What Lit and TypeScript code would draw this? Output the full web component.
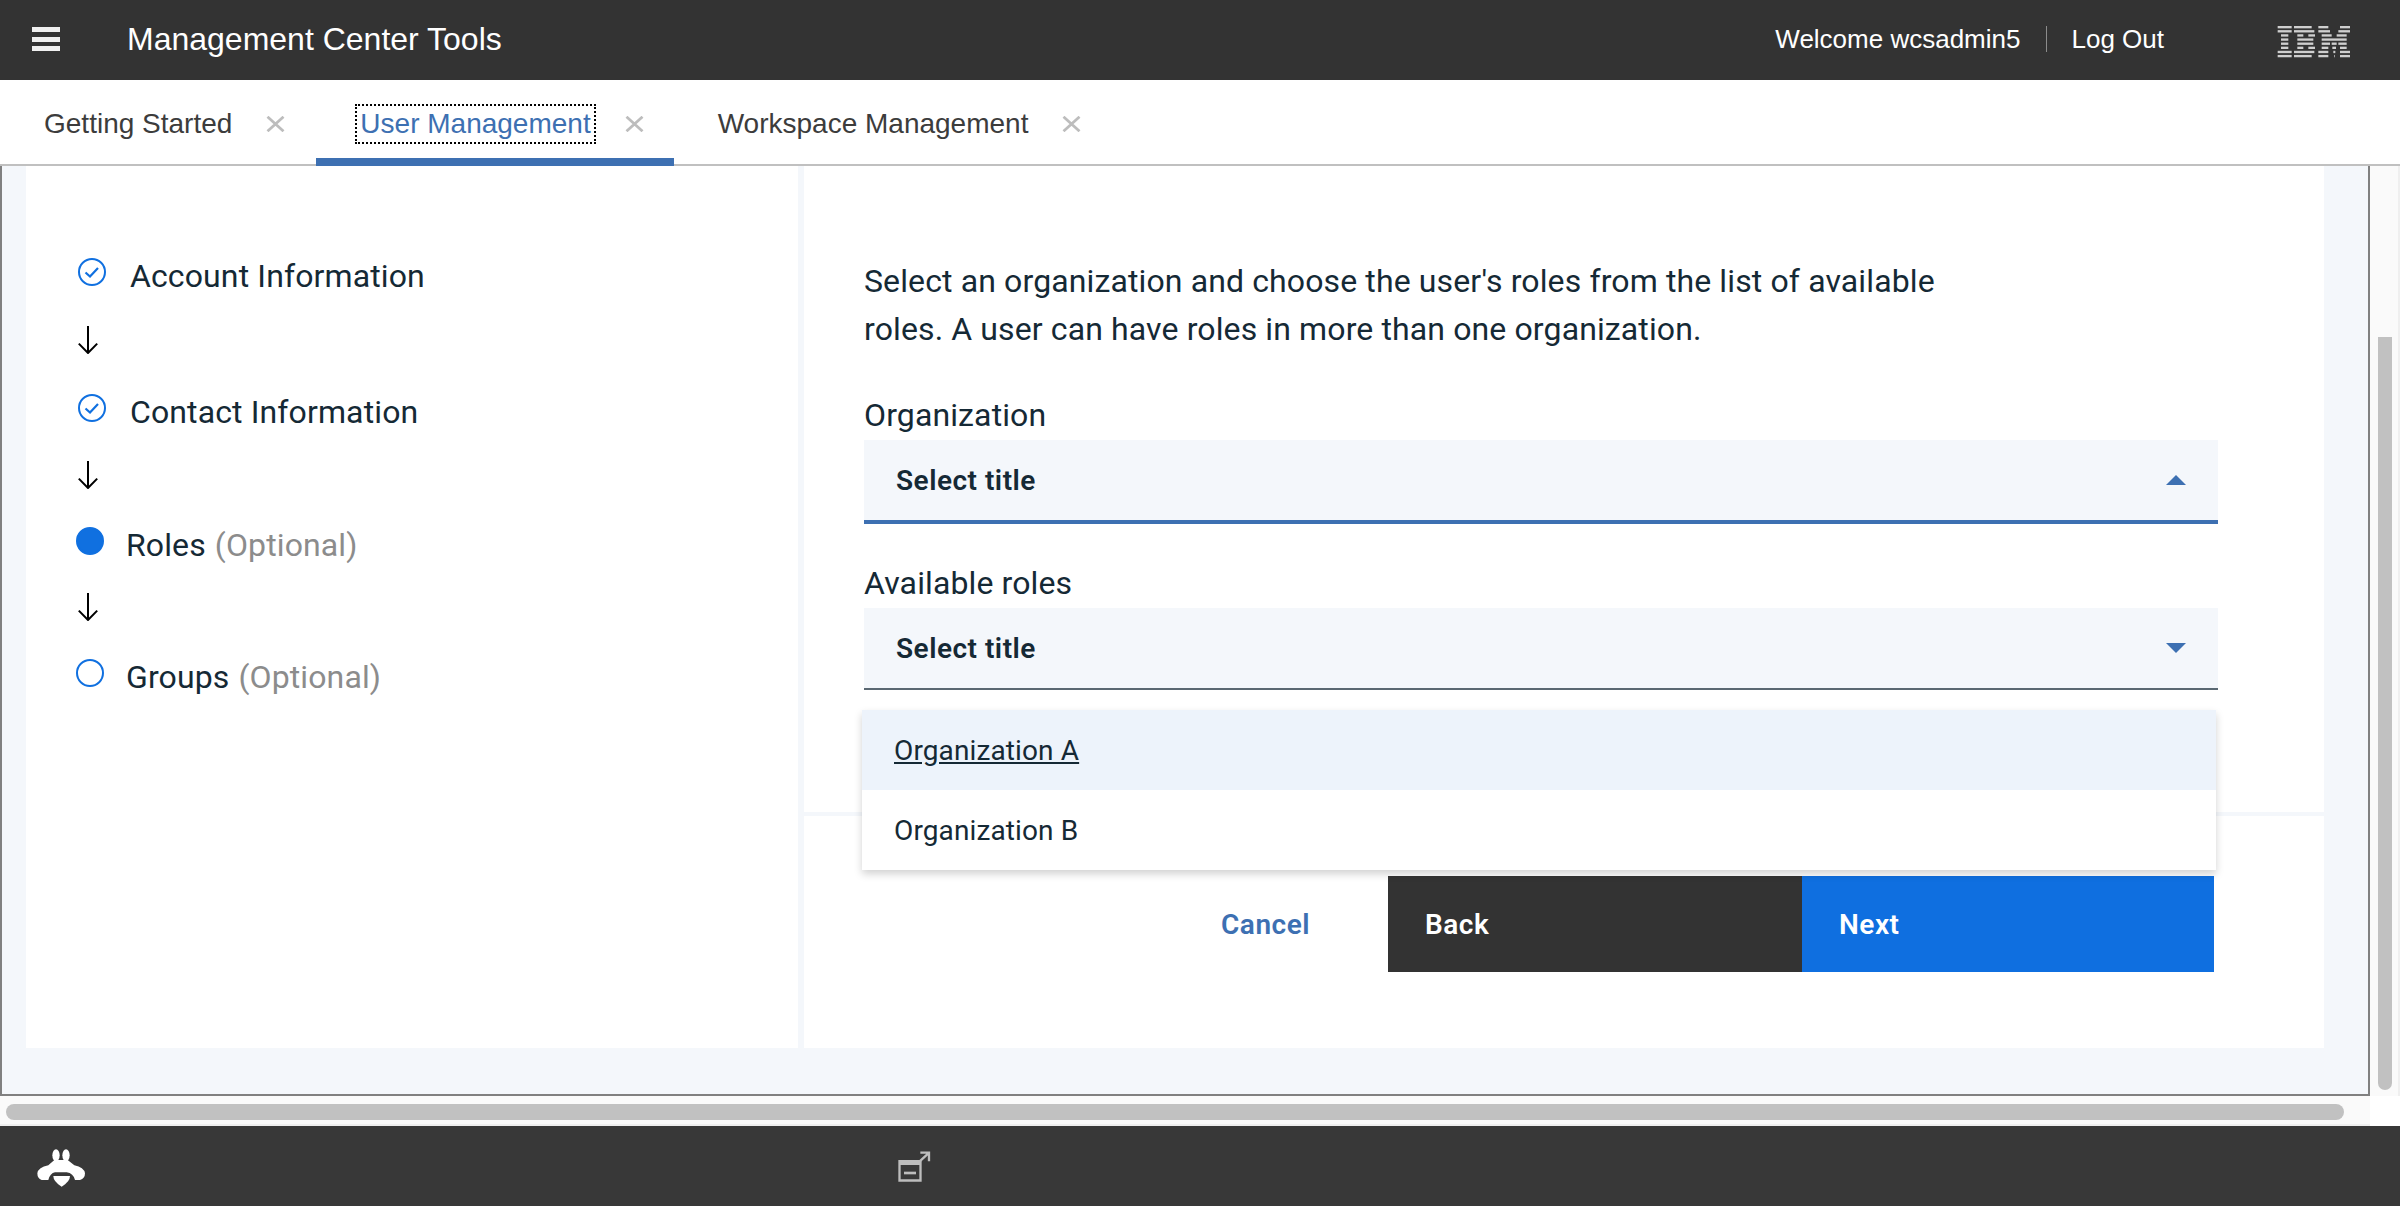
import { LitElement, html, css, svg } from "lit";
import { customElement } from "lit/decorators.js";

// x ranges of each of the eight logo bars, in the logo's own units
const IBM_ROWS: number[][][] = [
  [[38, 80], [87, 140], [160, 190], [225, 255]],
  [[38, 80], [87, 148], [160, 195], [220, 255]],
  [[48, 70], [97, 115], [130, 150], [170, 200], [215, 245]],
  [[48, 70], [97, 145], [170, 245]],
  [[48, 70], [97, 145], [170, 195], [200, 215], [220, 245]],
  [[48, 70], [97, 115], [130, 150], [170, 190], [202, 213], [225, 245]],
  [[38, 80], [87, 148], [160, 190], [205, 211], [225, 255]],
  [[38, 80], [87, 140], [160, 190], [207, 209], [225, 255]],
];

const closeIcon = html`<svg class="close" viewBox="0 0 19 16">
  <path d="M1.5 .8 17.5 15.2M17.5 .8 1.5 15.2" fill="none" stroke="#bdbdbd" stroke-width="2.8" />
</svg>`;

const arrowIcon = html`<svg class="arrow" viewBox="0 0 20 28">
  <path d="M10 0V27M.8 17.6 10 27l9.2-9.4" fill="none" stroke="#000" stroke-width="2" />
</svg>`;

const checkIcon = html`<svg class="check" viewBox="0 0 28 28">
  <circle cx="14" cy="14" r="13" fill="none" stroke="#1070e0" stroke-width="2" />
  <path d="M7.5 14.5 12 18.5 20 10" fill="none" stroke="#1070e0" stroke-width="2.2" />
</svg>`;

const caret = (up: boolean) => html`<svg class="caret" viewBox="0 0 20 10">
  <path d=${up ? "M0 10 10 0l10 10z" : "M0 0h20L10 10z"} fill="#3d70b2" />
</svg>`;

@customElement("app-root")
export class AppRoot extends LitElement {
  static styles = css`
    :host {
      display: flex;
      flex-direction: column;
      width: 2400px;
      height: 1206px;
      overflow: hidden;
      font-family: Roboto, sans-serif;
      letter-spacing: 0.12px;
      color: #152935;
      background: #fff;
    }
    header {
      height: 80px;
      flex: none;
      display: flex;
      align-items: center;
      padding-bottom: 2px;
      box-sizing: border-box;
      background: #333;
      color: #fff;
      font-family: "Liberation Sans", sans-serif;
      font-size: 26px;
      letter-spacing: 0;
    }
    .burger {
      width: 28px;
      height: 24px;
      margin-left: 32px;
      display: flex;
      flex-direction: column;
      justify-content: space-between;
    }
    .burger span {
      height: 5px;
      background: #f0f0f0;
    }
    .title {
      margin-left: 67px;
      font-size: 32px;
      flex: 1;
    }
    .sep {
      width: 1px;
      height: 26px;
      margin: 0 24px 0 26px;
      background: #8c8c8c;
    }
    .logo {
      width: 100px;
      height: 50px;
      margin: 2px 35px 0 101px;
    }
    .tabs {
      height: 84px;
      flex: none;
      display: flex;
      border-bottom: 2px solid #c0c0c0;
      font-family: "Liberation Sans", sans-serif;
      font-size: 28px;
      letter-spacing: 0;
      color: #3c3c3c;
    }
    .tab {
      display: flex;
      align-items: center;
      height: 86px;
      box-sizing: border-box;
      padding: 2px 31px 0 39px;
    }
    .tab.active {
      border-bottom: 8px solid #3d70b2;
      padding: 10px 30px 0 39px;
      color: #3d70b2;
    }
    .tab.active .label {
      outline: 2px dotted #000;
      outline-offset: -2px;
    }
    .label {
      height: 40px;
      line-height: 40px;
      padding: 0 5px;
      margin-right: 29px;
    }
    .close {
      width: 19px;
      height: 16px;
      flex: none;
    }
    .middle {
      flex: 1;
      display: flex;
      min-height: 0;
    }
    .frame {
      flex: 1;
      display: flex;
      gap: 6px;
      box-sizing: border-box;
      padding: 0 44px 46px 24px;
      background: #f4f7fb;
      border: 2px solid #808080;
      border-top: 0;
    }
    .steps {
      width: 772px;
      flex: none;
      box-sizing: border-box;
      padding: 72px 0 0 50px;
      background: #fff;
    }
    .row {
      height: 68px;
      display: flex;
      align-items: center;
      font-size: 32px;
    }
    .row.tight {
      height: 66px;
    }
    .name {
      padding-top: 8px;
    }
    .check {
      width: 28px;
      height: 28px;
      margin: 0 24px 0 2px;
    }
    .arrow {
      width: 20px;
      height: 28px;
      margin-left: 2px;
    }
    .dot {
      width: 28px;
      height: 28px;
      box-sizing: border-box;
      margin-right: 22px;
      border: 2px solid #1070e0;
      border-radius: 50%;
    }
    .dot.on {
      background: #1070e0;
    }
    .optional {
      color: #8c8c8c;
      margin-left: 9px;
    }
    .panel {
      flex: 1;
      display: flex;
      flex-direction: column;
      gap: 4px;
      position: relative;
    }
    .form {
      height: 646px;
      box-sizing: border-box;
      padding: 91px 0 0 60px;
      background: #fff;
    }
    .form p {
      margin: 0 0 38px;
      font-size: 32px;
      line-height: 48px;
    }
    .field {
      font-size: 32px;
      line-height: 48px;
      margin-bottom: 1px;
    }
    .select {
      width: 1354px;
      height: 84px;
      box-sizing: border-box;
      display: flex;
      align-items: center;
      justify-content: space-between;
      padding: 0 32px 0 32px;
      margin-bottom: 35px;
      background: #f4f7fb;
      border-bottom: 4px solid #3d70b2;
      font-size: 28px;
      font-weight: 600;
      letter-spacing: 0.5px;
    }
    .select.closed {
      height: 82px;
      border-bottom: 2px solid #5a6872;
    }
    .caret {
      width: 20px;
      height: 10px;
    }
    .menu {
      position: absolute;
      left: 58px;
      top: 544px;
      width: 1354px;
      background: #fff;
      box-shadow: 0 4px 8px rgba(0, 0, 0, 0.18);
      font-size: 28px;
    }
    .option {
      height: 80px;
      display: flex;
      align-items: center;
      padding-left: 32px;
    }
    .option.hover {
      background: #edf3fb;
      text-decoration: underline;
    }
    .actions {
      flex: 1;
      display: flex;
      justify-content: flex-end;
      align-items: flex-start;
      padding: 60px 110px 0 0;
      background: #fff;
      font-size: 28px;
      font-weight: 600;
      letter-spacing: 0.5px;
    }
    .cancel {
      height: 96px;
      line-height: 98px;
      margin-right: 78px;
      color: #3d70b2;
    }
    .btn {
      height: 96px;
      line-height: 98px;
      box-sizing: border-box;
      color: #fff;
    }
    .back {
      width: 414px;
      padding-left: 37px;
      background: #333;
    }
    .next {
      width: 412px;
      padding-left: 37px;
      background: #0f6fe0;
    }
    .vtrack {
      width: 30px;
      flex: none;
      box-sizing: border-box;
      padding: 171px 6px 6px 8px;
      background: #fafafa;
      border-right: 2px solid #efefef;
    }
    .vtrack div {
      height: 100%;
      border-radius: 0 0 8px 8px;
      background: #c1c1c1;
    }
    .bottom {
      height: 30px;
      flex: none;
      display: flex;
    }
    .htrack {
      flex: 1;
      box-sizing: border-box;
      padding: 8px 26px 4px 6px;
      background: #fafafa;
      border-bottom: 2px solid #efefef;
    }
    .htrack div {
      height: 16px;
      border-radius: 8px;
      background: #c1c1c1;
    }
    .corner {
      width: 30px;
    }
    footer {
      height: 80px;
      flex: none;
      display: flex;
      align-items: flex-start;
      background: #383838;
    }
    .bee {
      width: 80px;
      height: 56px;
      margin: 14px 0 0 20px;
    }
    .window {
      width: 60px;
      height: 50px;
      margin: 14px 0 0 785px;
    }
  `;

  render() {
    return html`
      <header>
        <div class="burger"><span></span><span></span><span></span></div>
        <div class="title">Management Center Tools</div>
        <span>Welcome wcsadmin5</span>
        <span class="sep"></span>
        <span>Log Out</span>
        <svg class="logo" viewBox="0 0 300 150">
          ${IBM_ROWS.map((bars, i) =>
            bars.map(
              ([a, b]) =>
                svg`<rect x=${a} y=${33 + i * 12.4} width=${b - a} height="7" fill="#cfcfcf" />`
            )
          )}
        </svg>
      </header>
      <nav class="tabs">
        <div class="tab"><span class="label">Getting Started</span>${closeIcon}</div>
        <div class="tab active"><span class="label">User Management</span>${closeIcon}</div>
        <div class="tab"><span class="label">Workspace Management</span>${closeIcon}</div>
      </nav>
      <div class="middle">
        <div class="frame">
          <aside class="steps">
            <div class="row">${checkIcon}<span class="name">Account Information</span></div>
            <div class="row">${arrowIcon}</div>
            <div class="row">${checkIcon}<span class="name">Contact Information</span></div>
            <div class="row tight">${arrowIcon}</div>
            <div class="row tight">
              <span class="dot on"></span>
              <span class="name">Roles<span class="optional">(Optional)</span></span>
            </div>
            <div class="row tight">${arrowIcon}</div>
            <div class="row tight">
              <span class="dot"></span>
              <span class="name">Groups<span class="optional">(Optional)</span></span>
            </div>
          </aside>
          <section class="panel">
            <div class="form">
              <p>
                Select an organization and choose the user's roles from the list of available<br />
                roles. A user can have roles in more than one organization.
              </p>
              <div class="field">Organization</div>
              <div class="select"><span>Select title</span>${caret(true)}</div>
              <div class="field">Available roles</div>
              <div class="select closed"><span>Select title</span>${caret(false)}</div>
            </div>
            <div class="actions">
              <span class="cancel">Cancel</span>
              <span class="btn back">Back</span>
              <span class="btn next">Next</span>
            </div>
            <div class="menu">
              <div class="option hover">Organization A</div>
              <div class="option">Organization B</div>
            </div>
          </section>
        </div>
        <div class="vtrack"><div></div></div>
      </div>
      <div class="bottom">
        <div class="htrack"><div></div></div>
        <div class="corner"></div>
      </div>
      <footer>
        <svg class="bee" viewBox="0 0 240 168">
          <g fill="#fff">
            <ellipse cx="108" cy="46" rx="11" ry="18" />
            <ellipse cx="138" cy="46" rx="11" ry="18" />
            <path d="M52 100Q55 82 85 76L103 60H143L163 76Q192 82 195 100Q195 115 180 120H165Q160 100 140 97H105Q90 100 85 120H65Q52 115 52 100Z" />
            <path d="M100 108H150Q150 125 125 140Q100 125 100 108Z" />
          </g>
        </svg>
        <svg class="window" viewBox="0 0 180 150">
          <path d="M40 60H110V125H40ZM47 75V118H103V75Z" fill="#bdbdbd" fill-rule="evenodd" />
          <rect x="57" y="95" width="36" height="8" fill="#bdbdbd" />
          <path d="M100 68 130 40M106 38H132V64" fill="none" stroke="#bdbdbd" stroke-width="7" />
        </svg>
      </footer>
    `;
  }
}
